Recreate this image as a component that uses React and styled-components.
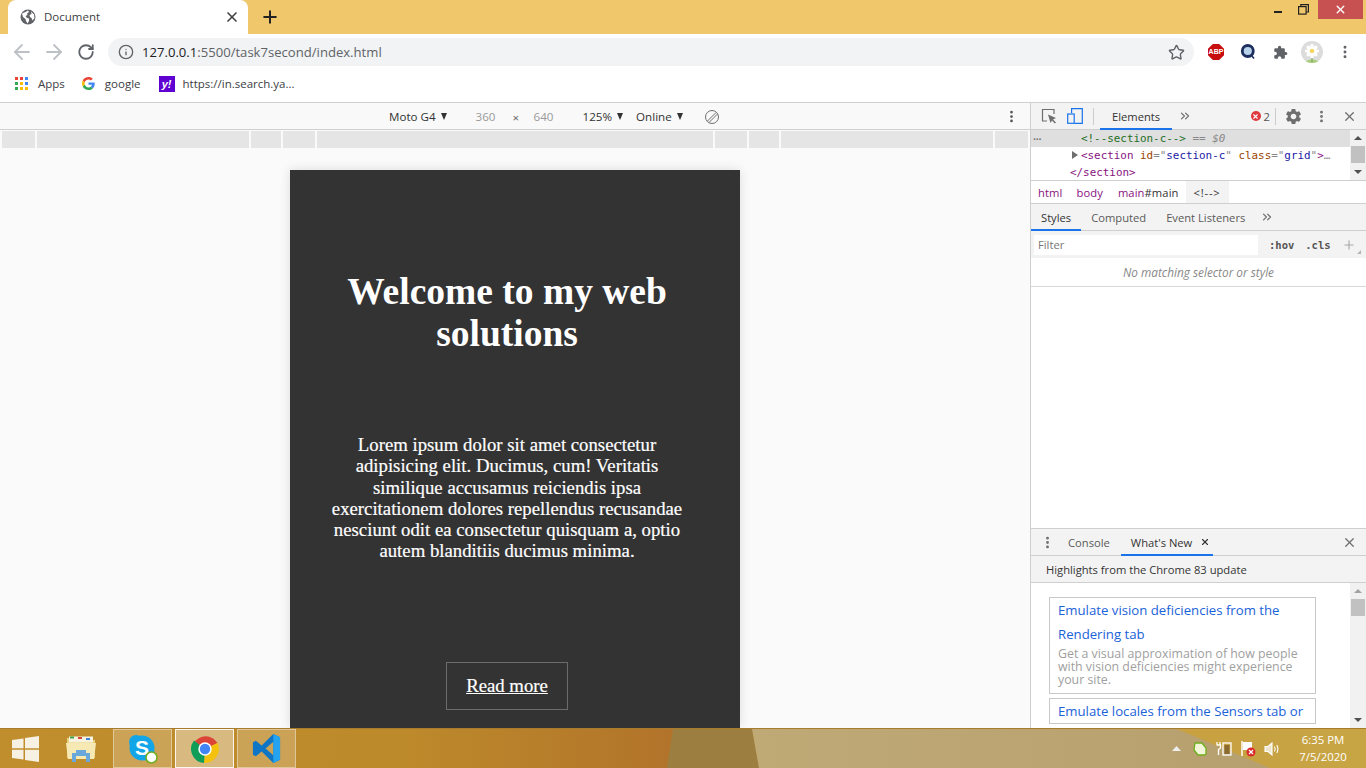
import React from 'react';
import styled, { createGlobalStyle } from 'styled-components';
import { ArrowLeft, ArrowRight, RotateCw, Info, Star, Plus, X, MoreVertical, ChevronsRight } from 'lucide-react';
import { MdSettings } from 'react-icons/md';

const UI_FONT = `"Open Sans", "Noto Sans", sans-serif`;
const MONO_FONT = `"DejaVu Sans Mono", "Liberation Mono", monospace`;
const SERIF_FONT = `"Liberation Serif", "Times New Roman", serif`;

const GlobalStyle = createGlobalStyle`
	html, body {
		margin: 0;
		padding: 0;
		width: 1366px;
		height: 768px;
		overflow: hidden;
		background: #fff;
	}
	* {
		box-sizing: border-box;
	}
`;

const Screen = styled.div`
	width: 1366px;
	height: 768px;
	display: flex;
	flex-direction: column;
	font-family: ${UI_FONT};
	overflow: hidden;
`;

/* ---------- tab strip ---------- */

const TabStrip = styled.div`
	height: 34px;
	background: #f0c76a;
	display: flex;
	align-items: flex-end;
	padding-left: 8px;
	flex-shrink: 0;
`;

const Tab = styled.div`
	width: 240px;
	height: 34px;
	background: #fff;
	border-radius: 8px 8px 0 0;
	display: flex;
	align-items: center;
	padding: 0 8px 0 12px;
	font-size: 11.5px;
	color: #3c4043;
`;

const TabTitle = styled.span`
	flex: 1;
	margin: -2px 0 0 8px;
`;

const NewTab = styled.div`
	width: 44px;
	height: 34px;
	display: flex;
	align-items: center;
	justify-content: center;
	color: #222;
`;

const WindowControls = styled.div`
	margin-left: auto;
	margin-right: 3px;
	align-self: flex-start;
	display: flex;
	align-items: flex-start;
`;

const WindowButton = styled.div`
	width: ${p => p.$w}px;
	height: 19px;
	background: ${p => p.$close ? '#c75050' : 'transparent'};
	color: ${p => p.$close ? '#fff' : '#222'};
	display: flex;
	align-items: center;
	justify-content: center;
`;

const MinimizeLine = styled.span`
	width: 8px;
	height: 2px;
	margin: 5px 0 0 0;
	background: #222;
`;

/* ---------- address bar ---------- */

const Toolbar = styled.div`
	height: 34px;
	background: #fff;
	display: flex;
	align-items: center;
	padding-top: 2px;
	flex-shrink: 0;
`;

const NavButton = styled.div`
	width: 32px;
	display: flex;
	align-items: center;
	justify-content: center;
	color: ${p => p.$off ? '#bdc1c6' : '#5f6368'};
`;

const NavGroup = styled.div`
	display: flex;
	margin: 0 6px;
`;

const Omnibox = styled.div`
	width: 1086px;
	height: 28px;
	border-radius: 14px;
	background: #f1f3f4;
	display: flex;
	align-items: center;
	padding: 0 9px 0 10px;
	font-size: 13.1px;
	color: #5f6368;
`;

const Url = styled.span`
	flex: 1;
	margin-left: 8px;
	white-space: nowrap;
`;

const Host = styled.span`
	color: #202124;
`;

const Extensions = styled.div`
	flex: 1;
	display: flex;
	align-items: center;
	padding-left: 12px;
	gap: 12px;
`;

const ExtSlot = styled.div`
	width: 20px;
	height: 22px;
	display: flex;
	align-items: center;
	justify-content: center;
	color: #5f6368;
`;

const Avatar = styled.div`
	width: 22px;
	height: 22px;
	margin-left: -1px;
	border-radius: 50%;
	background: #dcdcdc;
	display: flex;
	align-items: center;
	justify-content: center;
	overflow: hidden;
`;

/* ---------- bookmarks ---------- */

const Bookmarks = styled.div`
	height: 35px;
	background: #fff;
	display: flex;
	align-items: center;
	padding: 0 0 3px 15px;
	font-size: 11.5px;
	color: #3c4043;
	border-bottom: 1px solid #d0d0d0;
	flex-shrink: 0;
`;

const Bookmark = styled.div`
	display: flex;
	align-items: center;
	gap: ${p => p.$gap || 10}px;
	margin-right: ${p => p.$mr || 17}px;
	white-space: nowrap;
`;

/* ---------- main split ---------- */

const Workspace = styled.div`
	flex: 1;
	min-height: 0;
	display: flex;
`;

const Viewport = styled.div`
	width: 1030px;
	background: #fafafa;
	display: flex;
	flex-direction: column;
	flex-shrink: 0;
	overflow: hidden;
`;

const DeviceBar = styled.div`
	height: 27px;
	background: #f9f9f9;
	border-bottom: 1px solid #cfcfcf;
	display: flex;
	align-items: center;
	font-size: 11.6px;
	color: #333;
	padding: 1px 0 0 389px;
	flex-shrink: 0;
`;

const Dropdown = styled.span`
	display: inline-flex;
	align-items: center;
	gap: 5px;
	margin-right: ${p => p.$gap || 0}px;
	&::after {
		content: '';
		border-left: 3.5px solid transparent;
		border-right: 3.5px solid transparent;
		border-top: 7px solid #333;
	}
`;

const DimField = styled.span`
	color: #999;
	width: ${p => p.$w}px;
`;

const DimCross = styled.span`
	color: #666;
	width: 21px;
	padding-top: 2px;
`;

const RotateSlot = styled.div`
	margin-left: 21px;
	display: flex;
	color: #666;
`;

const BarMenu = styled.div`
	margin-left: auto;
	width: 38px;
	display: flex;
	justify-content: center;
	color: #555;
`;

const Ruler = styled.div`
	height: 17px;
	margin: 1px 0 0 2px;
	display: flex;
	gap: 2px;
	flex-shrink: 0;
`;

const RulerCell = styled.div`
	width: ${p => p.$w}px;
	background: #e5e5e5;
`;

const PageArea = styled.div`
	flex: 1;
	min-height: 0;
	padding-top: 22px;
	padding-left: 290px;
`;

const Card = styled.main`
	width: 450px;
	height: 558px;
	background: #333;
	box-shadow: 0 0 10px rgba(0, 0, 0, 0.12);
	color: #fff;
	font-family: ${SERIF_FONT};
	text-align: center;
	display: flex;
	flex-direction: column;
	align-items: center;
	padding-top: 101px;
	overflow: hidden;
`;

const Heading = styled.h1`
	width: 370px;
	margin: 0 0 0 -16px;
	font-size: 37.5px;
	line-height: 42px;
	font-weight: bold;
`;

const Lorem = styled.p`
	width: 360px;
	margin: 79px 0 0 -16px;
	font-size: 18.75px;
	line-height: 21.25px;
	-webkit-text-stroke: 0.2px #fff;
`;

const ReadMore = styled.a`
	width: 122px;
	height: 48px;
	margin: 100px 0 0 -16px;
	border: 1px solid #6c6c6c;
	display: flex;
	align-items: center;
	justify-content: center;
	color: #fff;
	font-size: 18.75px;
	text-decoration: underline;
	-webkit-text-stroke: 0.2px #fff;
	flex-shrink: 0;
`;

/* ---------- devtools ---------- */

const DevTools = styled.div`
	flex: 1;
	min-width: 0;
	border-left: 1px solid #cfcfcf;
	display: flex;
	flex-direction: column;
	background: #fff;
	font-size: 11.2px;
	color: #444;
`;

const DevTabs = styled.div`
	height: 27px;
	background: #f3f3f3;
	border-bottom: 1px solid #cfcfcf;
	display: flex;
	align-items: stretch;
	flex-shrink: 0;
`;

const DevTab = styled.div`
	display: flex;
	align-items: center;
	gap: 8px;
	padding: 1px ${p => p.$pr ?? p.$pad ?? 10}px 0 ${p => p.$pad ?? 10}px;
	margin-bottom: -1px;
	margin-right: ${p => p.$mr || 0}px;
	color: ${p => p.$active ? '#333' : '#5a5a5a'};
	border-bottom: 2px solid ${p => p.$active ? '#1a73e8' : 'transparent'};
	white-space: nowrap;
`;

const ToolIcon = styled.div`
	display: flex;
	align-items: center;
	justify-content: center;
	width: ${p => p.$w || 26}px;
	color: #6e6e6e;
	margin-left: ${p => p.$ml || 0}px;
`;

const CloseIcon = styled(ToolIcon)`
	margin-right: 3px;
`;

const DrawerClose = styled(CloseIcon)`
	margin-left: auto;
`;

const VDivider = styled.div`
	width: 1px;
	height: 17px;
	background: #ccc;
	align-self: center;
	margin: ${p => p.$m};
`;

const ErrorCount = styled.div`
	margin-left: auto;
	display: flex;
	align-items: center;
	gap: 3px;
	color: #555;
`;

const ErrorDot = styled.span`
	width: 10px;
	height: 10px;
	border-radius: 50%;
	background: #e0393e;
	color: #fff;
	display: flex;
	align-items: center;
	justify-content: center;
`;

const ElementsPane = styled.div`
	height: 51px;
	border-bottom: 1px solid #cfcfcf;
	display: flex;
	flex-shrink: 0;
	overflow: hidden;
`;

const ElementsTree = styled.div`
	flex: 1;
	min-width: 0;
	font-family: ${MONO_FONT};
	font-size: 10.9px;
	color: #888;
`;

const TreeRow = styled.div`
	height: ${p => p.$selected ? '17px' : '16.5px'};
	line-height: ${p => p.$selected ? '18px' : '17px'};
	padding-left: ${p => p.$indent}px;
	background: ${p => p.$selected ? '#dfdfdf' : 'transparent'};
	white-space: nowrap;
	position: relative;
`;

const Dots = styled.span`
	position: absolute;
	left: 2px;
	top: 0;
	color: #777;
	font-family: ${UI_FONT};
	font-size: 8px;
	letter-spacing: -0.3px;
`;

const Caret = styled.span`
	display: inline-block;
	border-top: 4px solid transparent;
	border-bottom: 4px solid transparent;
	border-left: 6px solid #6e6e6e;
	margin-right: 3px;
`;

const Comment = styled.span`color: #236e25;`;
const TagName = styled.span`color: #881280;`;
const AttrName = styled.span`color: #994500;`;
const AttrValue = styled.span`color: #1a1aa6;`;
const DollarZero = styled.span`font-style: italic; color: #888;`;

const Scrollbar = styled.div`
	width: 16px;
	flex-shrink: 0;
	background: #f1f1f1;
	display: flex;
	flex-direction: column;
	align-items: center;
`;

const ScrollArrow = styled.div`
	height: ${p => p.$h || 16}px;
	display: flex;
	align-items: center;
	justify-content: center;
	margin-top: ${p => p.$auto ? 'auto' : '0'};
	&::after {
		content: '';
		border-left: 4px solid transparent;
		border-right: 4px solid transparent;
		${p => p.$down ? 'border-top' : 'border-bottom'}: 4px solid ${p => p.$dim ? '#a3a3a3' : '#505050'};
	}
`;

const ScrollThumb = styled.div`
	width: 14px;
	height: ${p => p.$h}px;
	background: #c1c1c1;
`;

const Breadcrumbs = styled.div`
	height: 23px;
	border-bottom: 1px solid #cfcfcf;
	display: flex;
	align-items: stretch;
	padding-left: 2px;
	flex-shrink: 0;
`;

const Crumb = styled.div`
	display: flex;
	align-items: center;
	padding: 0 ${p => p.$current ? 8 : 5}px;
	margin-right: ${p => p.$gap || 0}px;
	color: #333;
	letter-spacing: ${p => p.$current ? '0.8px' : '0.1px'};
	background: ${p => p.$current ? '#f3f3f3' : 'transparent'};
`;

const FilterBar = styled.div`
	height: 27px;
	background: #f3f3f3;
	padding: 3px 0 3px 3px;
	display: flex;
	align-items: center;
	flex-shrink: 0;
`;

const FilterInput = styled.div`
	width: 224px;
	height: 20px;
	background: #fff;
	color: #777;
	padding-left: 4px;
	display: flex;
	align-items: center;
`;

const FilterToggle = styled.span`
	font-family: ${MONO_FONT};
	font-weight: bold;
	font-size: 10.5px;
	color: #555;
	margin-left: ${p => p.$ml}px;
`;

const FilterPlus = styled(ToolIcon)`
	position: relative;
	&::after {
		content: '';
		position: absolute;
		right: -4px;
		bottom: -2px;
		border-left: 4px solid transparent;
		border-bottom: 4px solid #b5b5b5;
	}
`;

const EmptyNote = styled.div`
	height: 29px;
	border-bottom: 1px solid #d8d8d8;
	text-align: center;
	line-height: 29px;
	font-size: 11.8px;
	font-style: italic;
	color: #888;
	flex-shrink: 0;
`;

const StylesBody = styled.div`
	flex: 1;
	min-height: 0;
	border-bottom: 1px solid #cfcfcf;
`;

const DrawerHead = styled.div`
	height: 27px;
	background: #f3f3f3;
	border-bottom: 1px solid #cfcfcf;
	padding: 1px 0 0 15px;
	display: flex;
	align-items: center;
	color: #333;
	flex-shrink: 0;
`;

const Drawer = styled.div`
	height: 145px;
	display: flex;
	flex-shrink: 0;
	overflow: hidden;
`;

const NewsList = styled.div`
	flex: 1;
	min-width: 0;
	padding: 14px 0 0 18px;
`;

const NewsCard = styled.div`
	width: 267px;
	border: 1px solid #c8c8c8;
	padding: 0 8px;
	margin-bottom: 4px;
`;

const NewsTitle = styled.div`
	font-size: 13.2px;
	line-height: 24px;
	color: #1a62d8;
	white-space: nowrap;
`;

const NewsText = styled.div`
	font-size: 12.35px;
	line-height: 13px;
	color: #a0a0a0;
	padding: 1px 0 7px;
`;

/* ---------- taskbar ---------- */

const Taskbar = styled.div`
	height: 40px;
	flex-shrink: 0;
	position: relative;
	background: linear-gradient(90deg, #c18e2d 0, #bd8a2b 400px, #b2742a 668px, #c8a040 1177px, #c7a545 100%);
	border-top: 1px solid #a87c2c;
	display: flex;
	align-items: stretch;
	color: #fff;
`;

const OliveBand = styled.div`
	position: absolute;
	top: 0;
	bottom: 0;
	left: 667px;
	width: 92px;
	background: #9c7f40;
	clip-path: polygon(6px 0, 85px 0, 92px 100%, 0 100%);
`;

const BeigeBand = styled.div`
	position: absolute;
	top: 0;
	bottom: 0;
	left: 752px;
	width: 518px;
	background: linear-gradient(90deg, #bfa975, #b7a06f);
	clip-path: polygon(0 0, 425px 0, 518px 100%, 7px 100%);
`;

const StartSlot = styled.div`
	width: 51px;
	display: flex;
	align-items: center;
	justify-content: center;
	z-index: 1;
`;

const Pinned = styled.div`
	width: 59px;
	display: flex;
	align-items: center;
	justify-content: center;
	z-index: 1;
	margin-right: 3px;
	border: 1px solid ${p => p.$active ? 'rgba(255, 255, 255, 0.85)' : p.$box ? 'rgba(255, 255, 255, 0.4)' : 'transparent'};
	background: ${p => p.$active ? 'rgba(255, 255, 255, 0.4)' : p.$box ? 'rgba(255, 255, 255, 0.2)' : 'transparent'};
`;

const Tray = styled.div`
	margin-left: auto;
	display: flex;
	align-items: center;
	z-index: 1;
	padding-right: 18px;
`;

const TrayIcon = styled.div`
	width: 24px;
	display: flex;
	justify-content: center;
`;

const Clock = styled.div`
	width: 50px;
	margin: -2px 0 0 14px;
	font-size: 11.4px;
	line-height: 17px;
	text-align: center;
	white-space: nowrap;
	color: #fff;
`;

/* ---------- drawn icons ---------- */

const GlobeIcon = () => (
	<svg width="16" height="16" viewBox="0 0 16 16">
		<circle cx="8" cy="8" r="7.5" fill="#5f6368" />
		<path d="M2 4.5 L5.5 3 L8 1.5 L9 3 L7 4.5 L7.5 6 L5.5 7 L7 9 L9 9.5 L9 12 L7.5 14.5 L6 12 L5.5 10 L3 8 Z M11 2.5 L14 5.5 L14.5 9 L12.5 11.5 L11.5 9 L10 8 L9.5 6 L11.5 5 Z" fill="#fff" />
	</svg>
);

const AppsIcon = () => {
	const colors = ['#ea4335', '#ea4335', '#4285f4', '#34a853', '#fbbc05', '#4285f4', '#34a853', '#fbbc05', '#fbbc05'];
	return (
		<svg width="13" height="13" viewBox="0 0 13 13">
			{colors.map((c, i) => (
				<rect key={i} x={(i % 3) * 5} y={Math.floor(i / 3) * 5} width="3" height="3" fill={c} />
			))}
		</svg>
	);
};

const GoogleIcon = () => (
	<svg width="13" height="13" viewBox="0 0 48 48">
		<path fill="#EA4335" d="M24 9.5c3.5 0 6.700 1.300 9.100 3.500l6.800-6.800C35.800 2.400 30.300 0 24 0 14.600 0 6.500 5.400 2.600 13.200l7.900 6.100C12.400 13.700 17.700 9.500 24 9.500z" />
		<path fill="#4285F4" d="M46.900 24.500c0-1.600-.1-3.100-.4-4.500H24v9h12.900c-.6 3-2.200 5.400-4.800 7.100l7.700 6c4.500-4.200 7.100-10.300 7.100-17.600z" />
		<path fill="#FBBC05" d="M10.500 28.700c-.5-1.500-.8-3-.8-4.700s.3-3.200.8-4.700l-7.900-6.100C.9 16.500 0 20.100 0 24s.9 7.500 2.600 10.800l7.900-6.100z" />
		<path fill="#34A853" d="M24 48c6.500 0 11.900-2.100 15.800-5.800l-7.700-6c-2.100 1.400-4.900 2.300-8.100 2.300-6.300 0-11.600-4.200-13.500-9.800l-7.900 6.100C6.500 42.600 14.600 48 24 48z" />
	</svg>
);

const YahooBadge = styled.span`
	width: 16px;
	height: 16px;
	margin-left: 1px;
	background: #5f01d1;
	color: #fff;
	font-family: "Liberation Sans", sans-serif;
	font-weight: bold;
	font-size: 11px;
	line-height: 16px;
	text-align: center;
	font-style: italic;
`;

const AbpBadge = styled.span`
	width: 16px;
	height: 16px;
	background: #c70d0d;
	clip-path: polygon(30% 0, 70% 0, 100% 30%, 100% 70%, 70% 100%, 30% 100%, 0 70%, 0 30%);
	color: #fff;
	font-family: "Liberation Sans", sans-serif;
	font-weight: bold;
	font-size: 7px;
	line-height: 16px;
	text-align: center;
	white-space: nowrap;
`;

const SearchExt = () => (
	<svg width="16" height="16" viewBox="0 0 16 16">
		<circle cx="7.800" cy="7" r="5.500" fill="#b8d2ea" stroke="#1b2e5e" strokeWidth="2.800" />
		<path d="M11.500 11.500 L14 14.500" stroke="#1b2e5e" strokeWidth="1.600" />
	</svg>
);

const PuzzleIcon = () => (
	<svg width="15" height="15" viewBox="0 0 24 24" fill="#5f6368">
		<path d="M20.500 11H19V7a2 2 0 0 0-2-2h-4V3.500a2.500 2.500 0 0 0-5 0V5H4a2 2 0 0 0-2 2v3.800h1.500a2.700 2.700 0 0 1 0 5.400H2V20a2 2 0 0 0 2 2h3.800v-1.500a2.700 2.700 0 0 1 5.400 0V22H17a2 2 0 0 0 2-2v-4h1.500a2.500 2.500 0 0 0 0-5z" />
	</svg>
);

const DaisyIcon = () => {
	const petals = [0, 45, 90, 135, 180, 225, 270, 315];
	return (
		<svg width="22" height="22" viewBox="0 0 22 22">
			<ellipse cx="11" cy="21" rx="6" ry="2.500" fill="#a6cf7c" />
			<path d="M11 11 V21" stroke="#7a9c5a" strokeWidth="1" />
			{petals.map(a => (
				<ellipse key={a} cx="11" cy="6" rx="1.800" ry="3.200" fill="#fff" transform={`rotate(${a} 11 10)`} />
			))}
			<circle cx="11" cy="10" r="2.300" fill="#f2d862" />
		</svg>
	);
};

const RestoreIcon = () => (
	<svg width="11" height="11" viewBox="0 0 11 11" fill="none" stroke="#222" strokeWidth="1.200">
		<rect x="0.600" y="2.600" width="7.500" height="7.500" />
		<path d="M2.800 2.500 V0.600 H10.400 V8 H8.200" />
	</svg>
);

const RotateOff = () => (
	<svg width="16" height="16" viewBox="0 0 16 16" fill="none" stroke="#6e6e6e" strokeWidth="1">
		<circle cx="8" cy="8" r="6.500" />
		<path d="M3.500 12 L12 3.500 M5 13.500 L13.500 5" />
	</svg>
);

const InspectIcon = () => (
	<svg width="16" height="16" viewBox="0 0 16 16" fill="none">
		<path d="M6 13 H1.500 V1.500 H13 V6" stroke="#6e6e6e" strokeWidth="1.200" />
		<path d="M7 6.500 L15 10 L12 11.500 L15 14.500 L13.800 15.500 L11 12.500 L9.500 15 Z" fill="#6e6e6e" />
	</svg>
);

const DeviceIcon = () => (
	<svg width="16" height="16" viewBox="0 0 16 16" fill="none" stroke="#1a73e8" strokeWidth="1.200">
		<path d="M4.600 5 V0.700 H15.300 V15.300 H7.500" />
		<rect x="0.700" y="6" width="6.500" height="9.300" />
	</svg>
);

const FolderIcon = () => (
	<svg width="32" height="30" viewBox="0 0 32 30">
		<path d="M2 4 H13 L15 6 H30 V24 H2 Z" fill="#e8d080" />
		<rect x="4" y="2.500" width="24" height="6" fill="#f8f3de" />
		<rect x="5" y="2.500" width="4" height="2" fill="#3fa34d" />
		<rect x="13" y="3" width="4" height="2" fill="#d6453d" />
		<rect x="21" y="4" width="4" height="2" fill="#3b82d6" />
		<path d="M1 9 H31 L29 25 H3 Z" fill="#f7e9b4" />
		<path d="M7 28 V19 H11 V16 H21 V19 H25 V28 H21 V22 H11 V28 Z" fill="#6aa8dc" />
	</svg>
);

const SkypeIcon = () => (
	<svg width="32" height="32" viewBox="0 0 32 32">
		<circle cx="9" cy="9" r="7" fill="#12a5e8" />
		<circle cx="21" cy="21" r="7" fill="#12a5e8" />
		<circle cx="15" cy="15" r="12.500" fill="#12a5e8" />
		<text x="15" y="22" textAnchor="middle" fontFamily="Liberation Sans, sans-serif" fontWeight="bold" fontSize="21" fill="#fff">S</text>
		<circle cx="24.500" cy="24.500" r="5.500" fill="#fff" stroke="#6fae1c" strokeWidth="1.500" />
	</svg>
);

const ChromeIcon = () => (
	<svg width="30" height="30" viewBox="0 0 30 30">
		<path d="M15 15 L4 8.500 A14 14 0 0 1 27.500 9 Z" fill="#db4437" />
		<path d="M15 15 L27.500 9 A14 14 0 0 1 14 29 Z" fill="#f4c20d" />
		<path d="M15 15 L14 29 A14 14 0 0 1 4 6.500 Z" fill="#0f9d58" />
		<circle cx="15" cy="15" r="6.700" fill="#fff" />
		<circle cx="15" cy="15" r="5.200" fill="#4285f4" />
	</svg>
);

const VsCodeIcon = () => (
	<svg width="33" height="31" viewBox="0 0 30 32">
		<path d="M22 1 L29 4.500 V27.500 L22 31 L10 19 L4 24 L1 22.500 V9.500 L4 8 L10 13 Z M22 9 L14 16 L22 23 Z" fill="#0f76c6" />
		<path d="M22 1 L29 4.500 V27.500 L22 31 Z" fill="#25a3ee" />
	</svg>
);

const WindowsLogo = () => (
	<svg width="27" height="26" viewBox="0 0 27 26" fill="#f6f1e2">
		<polygon points="0,4 11.500,2.400 11.500,12.300 0,12.300" />
		<polygon points="13,2.100 27,0 27,12.300 13,12.300" />
		<polygon points="0,13.700 11.500,13.700 11.500,23.600 0,22" />
		<polygon points="13,13.700 27,13.700 27,26 13,23.900" />
	</svg>
);

const TrayUp = () => (
	<svg width="9" height="6" viewBox="0 0 9 6"><polygon points="4.500,0 9,5 0,5" fill="#eee" /></svg>
);

const TrayLeaf = () => (
	<svg width="14" height="14" viewBox="0 0 14 14">
		<path d="M2 1 H9 L13 6 V12 L11 13 H5 L1 8 Z" fill="#f2f6d8" stroke="#6fae1c" strokeWidth="1.300" />
	</svg>
);

const TrayPower = () => (
	<svg width="16" height="15" viewBox="0 0 16 15" fill="none" stroke="#fff" strokeWidth="1.300">
		<path d="M1 1 V4 M4 1 V4 M0.500 4 H4.500 V7 L2.500 8.500 V14" />
		<rect x="7" y="2" width="8" height="12" />
		<rect x="8.500" y="4" width="5" height="9" fill="#8a6a30" stroke="none" />
	</svg>
);

const TrayFlag = () => (
	<svg width="15" height="17" viewBox="0 0 15 17">
		<path d="M1 1 V16" stroke="#fff" strokeWidth="1.500" />
		<path d="M2 2 H11 V10 H2 Z" fill="#fff" />
		<circle cx="10" cy="12" r="4.500" fill="#d92b2b" />
		<path d="M8 10 L12 14 M12 10 L8 14" stroke="#fff" strokeWidth="1.200" />
	</svg>
);

const TraySound = () => (
	<svg width="16" height="14" viewBox="0 0 16 14" fill="none" stroke="#fff" strokeWidth="1.100">
		<path d="M1 4.500 H4 L8 1 V13 L4 9.500 H1 Z" fill="#efe6cf" />
		<path d="M10.500 4.500 Q12 7 10.500 9.500 M12.800 3 Q15 7 12.800 11" />
	</svg>
);

const RULER_CELLS = [33, 212, 30, 32, 396, 32, 30, 212, 33];

export default function App() {
	return (
		<Screen>
			<GlobalStyle />
			<TabStrip>
				<Tab>
					<GlobeIcon />
					<TabTitle>Document</TabTitle>
					<X size={16} strokeWidth={2.5} color="#444" />
				</Tab>
				<NewTab><Plus size={20} strokeWidth={2.4} /></NewTab>
				<WindowControls>
					<WindowButton $w={22}><MinimizeLine /></WindowButton>
					<WindowButton $w={29}><RestoreIcon /></WindowButton>
					<WindowButton $w={45} $close><X size={13} strokeWidth={2.6} /></WindowButton>
				</WindowControls>
			</TabStrip>

			<Toolbar>
				<NavGroup>
					<NavButton $off><ArrowLeft size={24} strokeWidth={1.8} /></NavButton>
					<NavButton $off><ArrowRight size={24} strokeWidth={1.8} /></NavButton>
					<NavButton><RotateCw size={18} strokeWidth={2.4} /></NavButton>
				</NavGroup>
				<Omnibox>
					<Info size={16} strokeWidth={2} />
					<Url><Host>127.0.0.1</Host>:5500/task7second/index.html</Url>
					<Star size={17} strokeWidth={2} />
				</Omnibox>
				<Extensions>
					<ExtSlot><AbpBadge>ABP</AbpBadge></ExtSlot>
					<ExtSlot><SearchExt /></ExtSlot>
					<ExtSlot><PuzzleIcon /></ExtSlot>
					<Avatar><DaisyIcon /></Avatar>
					<ExtSlot><MoreVertical size={16} strokeWidth={2.4} /></ExtSlot>
				</Extensions>
			</Toolbar>

			<Bookmarks>
				<Bookmark><AppsIcon />Apps</Bookmark>
				<Bookmark $mr={17}><GoogleIcon />google</Bookmark>
				<Bookmark $gap={8}><YahooBadge>y!</YahooBadge>https://in.search.ya...</Bookmark>
			</Bookmarks>

			<Workspace>
				<Viewport>
					<DeviceBar>
						<Dropdown $gap={29}>Moto G4</Dropdown>
						<DimField $w={37}>360</DimField>
						<DimCross>×</DimCross>
						<DimField $w={49}>640</DimField>
						<Dropdown $gap={13}>125%</Dropdown>
						<Dropdown>Online</Dropdown>
						<RotateSlot><RotateOff /></RotateSlot>
						<BarMenu><MoreVertical size={15} strokeWidth={2.4} /></BarMenu>
					</DeviceBar>
					<Ruler>
						{RULER_CELLS.map((w, i) => <RulerCell key={i} $w={w} />)}
					</Ruler>
					<PageArea>
						<Card>
							<Heading>Welcome to my web solutions</Heading>
							<Lorem>
								Lorem ipsum dolor sit amet consectetur adipisicing elit. Ducimus, cum! Veritatis similique accusamus reiciendis ipsa exercitationem dolores repellendus recusandae nesciunt odit ea consectetur quisquam a, optio autem blanditiis ducimus minima.
							</Lorem>
							<ReadMore>Read more</ReadMore>
						</Card>
					</PageArea>
				</Viewport>

				<DevTools>
					<DevTabs>
						<ToolIcon $w={31} $ml={2}><InspectIcon /></ToolIcon>
						<ToolIcon $w={22}><DeviceIcon /></ToolIcon>
						<VDivider $m="0 6px 0 7px" />
						<DevTab $active $pad={12}>Elements</DevTab>
						<ToolIcon $w={26}><ChevronsRight size={14} /></ToolIcon>
						<ErrorCount>
							<ErrorDot><X size={7} strokeWidth={4} /></ErrorDot>2
						</ErrorCount>
						<VDivider $m="0 3px 0 5px" />
						<ToolIcon $w={28}><MdSettings size={19} /></ToolIcon>
						<ToolIcon $w={28}><MoreVertical size={15} strokeWidth={2.6} /></ToolIcon>
						<CloseIcon $w={28}><X size={15} strokeWidth={2} /></CloseIcon>
					</DevTabs>

					<ElementsPane>
						<ElementsTree>
							<TreeRow $selected $indent={50}>
								<Dots>•••</Dots>
								<Comment>&lt;!--section-c--&gt;</Comment> == <DollarZero>$0</DollarZero>
							</TreeRow>
							<TreeRow $indent={41}>
								<Caret /><TagName>&lt;section</TagName> <AttrName>id</AttrName>="<AttrValue>section-c</AttrValue>" <AttrName>class</AttrName>="<AttrValue>grid</AttrValue>"<TagName>&gt;</TagName>…
							</TreeRow>
							<TreeRow $indent={39}><TagName>&lt;/section&gt;</TagName></TreeRow>
						</ElementsTree>
						<Scrollbar>
							<ScrollArrow />
							<ScrollThumb $h={17} />
							<ScrollArrow $down $auto />
						</Scrollbar>
					</ElementsPane>

					<Breadcrumbs>
						<Crumb $gap={4}><TagName>html</TagName></Crumb>
						<Crumb $gap={5}><TagName>body</TagName></Crumb>
						<Crumb $gap={2}><TagName>main</TagName>#main</Crumb>
						<Crumb $current>&lt;!--&gt;</Crumb>
					</Breadcrumbs>

					<DevTabs>
						<DevTab $active>Styles</DevTab>
						<DevTab>Computed</DevTab>
						<DevTab>Event Listeners</DevTab>
						<ToolIcon $w={24}><ChevronsRight size={14} /></ToolIcon>
					</DevTabs>

					<FilterBar>
						<FilterInput>Filter</FilterInput>
						<FilterToggle $ml={11}>:hov</FilterToggle>
						<FilterToggle $ml={11}>.cls</FilterToggle>
						<FilterPlus $w={16} $ml={10}><Plus size={14} color="#aaa" /></FilterPlus>
					</FilterBar>

					<EmptyNote>No matching selector or style</EmptyNote>
					<StylesBody />

					<DevTabs>
						<ToolIcon $w={32}><MoreVertical size={15} strokeWidth={2.6} /></ToolIcon>
						<DevTab $pad={5} $mr={6}>Console</DevTab>
						<DevTab $active $pad={10} $pr={3}>What's New <X size={10} strokeWidth={2.6} /></DevTab>
						<DrawerClose $w={28}><X size={15} strokeWidth={2} /></DrawerClose>
					</DevTabs>

					<DrawerHead>Highlights from the Chrome 83 update</DrawerHead>

					<Drawer>
						<NewsList>
							<NewsCard>
								<NewsTitle>Emulate vision deficiencies from the<br />Rendering tab</NewsTitle>
								<NewsText>Get a visual approximation of how people with vision deficiencies might experience your site.</NewsText>
							</NewsCard>
							<NewsCard>
								<NewsTitle>Emulate locales from the Sensors tab or</NewsTitle>
							</NewsCard>
						</NewsList>
						<Scrollbar>
							<ScrollArrow $dim />
							<ScrollThumb $h={17} />
							<ScrollArrow $down $auto />
						</Scrollbar>
					</Drawer>
				</DevTools>
			</Workspace>

			<Taskbar>
				<OliveBand />
				<BeigeBand />
				<StartSlot><WindowsLogo /></StartSlot>
				<Pinned><FolderIcon /></Pinned>
				<Pinned $box><SkypeIcon /></Pinned>
				<Pinned $box $active><ChromeIcon /></Pinned>
				<Pinned $box><VsCodeIcon /></Pinned>
				<Tray>
					<TrayIcon><TrayUp /></TrayIcon>
					<TrayIcon><TrayLeaf /></TrayIcon>
					<TrayIcon><TrayPower /></TrayIcon>
					<TrayIcon><TrayFlag /></TrayIcon>
					<TrayIcon><TraySound /></TrayIcon>
					<Clock>6:35 PM<br />7/5/2020</Clock>
				</Tray>
			</Taskbar>
		</Screen>
	);
}
